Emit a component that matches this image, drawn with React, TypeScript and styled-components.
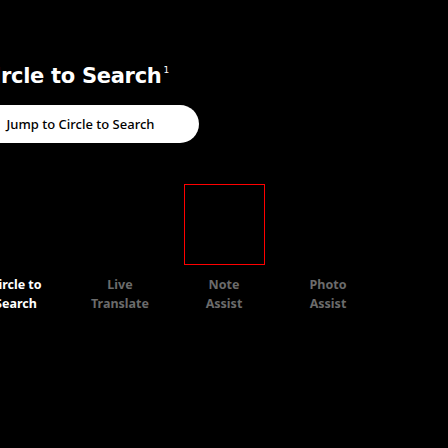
import React from "react";
import styled, { createGlobalStyle } from "styled-components";

const GlobalStyle = createGlobalStyle`
  html, body {
    margin: 0;
    padding: 0;
    background: #000;
    overflow: hidden;
  }
`;

const Stage = styled.main`
  width: 448px;
  height: 448px;
  overflow: hidden;
  background: #000;
  display: flex;
  flex-direction: column;
  align-items: flex-start;
`;

const Intro = styled.header`
  margin-left: -38px;
  padding-top: 63px;
  display: flex;
  flex-direction: column;
  align-items: flex-start;
`;

const Title = styled.h2`
  margin: 0 0 0 17px;
  font-family: "DejaVu Sans", "Noto Sans", sans-serif;
  font-weight: 700;
  font-size: 21px;
  line-height: 26px;
  color: #fff;
  white-space: nowrap;
  letter-spacing: -0.3px;

  sup {
    font-size: 9px;
    line-height: 0;
    vertical-align: baseline;
    position: relative;
    top: -10px;
    margin-left: 2px;
    font-weight: 400;
  }
`;

const JumpButton = styled.button`
  margin-top: 16px;
  width: 237px;
  height: 38px;
  border: none;
  border-radius: 19px;
  background: #fff;
  color: #000;
  font-family: "Noto Sans", sans-serif;
  font-weight: 500;
  font-size: 13px;
  display: flex;
  align-items: center;
  justify-content: center;
  padding: 0;
  white-space: nowrap;
`;

const Preview = styled.div`
  align-self: center;
  margin-top: 41px;
  width: 81px;
  height: 81px;
  box-sizing: border-box;
  border: 1px solid #ff0000;
`;

const Tabs = styled.nav`
  margin-top: 10px;
  margin-left: -36px;
  display: grid;
  grid-template-columns: repeat(4, 104px);
`;

const Tab = styled.div<{ $active?: boolean }>`
  text-align: center;
  font-family: "Noto Sans", sans-serif;
  font-weight: 700;
  font-size: 12.5px;
  line-height: 19px;
  color: ${(p) => (p.$active ? "#fff" : "#6b6b6b")};
`;

const tabs = [
  ["Circle to", "Search"],
  ["Live", "Translate"],
  ["Note", "Assist"],
  ["Photo", "Assist"],
];

export default function App() {
  return (
    <>
      <GlobalStyle />
      <Stage>
        <Intro>
          <Title>
            Circle to Search<sup>1</sup>
          </Title>
          <JumpButton>Jump to Circle to Search</JumpButton>
        </Intro>
        <Preview />
        <Tabs>
          {tabs.map(([a, b], i) => (
            <Tab key={i} $active={i === 0}>
              {a}
              <br />
              {b}
            </Tab>
          ))}
        </Tabs>
      </Stage>
    </>
  );
}
